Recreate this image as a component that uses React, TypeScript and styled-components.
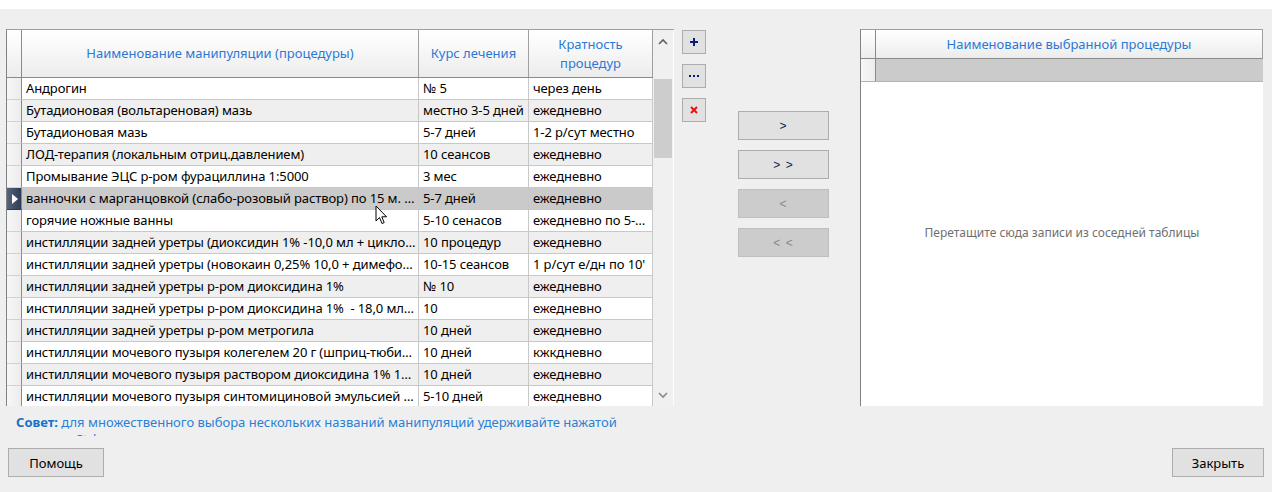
import React from "react";
import styled, { createGlobalStyle, css } from "styled-components";

const GlobalStyle = createGlobalStyle`
  html, body {
    margin: 0;
    padding: 0;
    background: #efefef;
  }
  * {
    box-sizing: border-box;
  }
`;

interface Proc {
  name: string;
  course: string;
  freq: string;
  clip?: boolean;
}

const procs: Proc[] = [
  { name: "Андрогин", course: "№ 5", freq: "через день" },
  { name: "Бутадионовая (вольтареновая) мазь", course: "местно 3-5 дней", freq: "ежедневно" },
  { name: "Бутадионовая мазь", course: "5-7 дней", freq: "1-2 р/сут местно" },
  { name: "ЛОД-терапия (локальным отриц.давлением)", course: "10 сеансов", freq: "ежедневно" },
  { name: "Промывание ЭЦС р-ром фурациллина 1:5000", course: "3 мес", freq: "ежедневно" },
  { name: "ванночки с марганцовкой (слабо-розовый раствор) по 15 м.\u00a0 2 раза", course: "5-7 дней", freq: "ежедневно" },
  { name: "горячие ножные ванны", course: "5-10 сенасов", freq: "ежедневно по 5-10 минут" },
  { name: "инстилляции задней уретры (диоксидин 1% -10,0 мл + циклоферон 2,0)", course: "10 процедур", freq: "ежедневно" },
  { name: "инстилляции задней уретры (новокаин 0,25% 10,0 + димефосфон 5,0)", course: "10-15 сеансов", freq: "1 р/сут е/дн по 10'", clip: true },
  { name: "инстилляции задней уретры р-ром диоксидина 1%", course: "№ 10", freq: "ежедневно" },
  { name: "инстилляции задней уретры р-ром диоксидина 1%\u00a0 - 18,0 мл + гидрокортизон", course: "10", freq: "ежедневно" },
  { name: "инстилляции задней уретры р-ром метрогила", course: "10 дней", freq: "ежедневно" },
  { name: "инстилляции мочевого пузыря колегелем 20 г (шприц-тюбик) в уретру", course: "10 дней", freq: "кжкдневно" },
  { name: "инстилляции мочевого пузыря раствором диоксидина 1% 10 мл", course: "10 дней", freq: "ежедневно" },
  { name: "инстилляции мочевого пузыря синтомициновой эмульсией 10%", course: "5-10 дней", freq: "ежедневно" },
];

const SELECTED = 5;

const Window = styled.div`
  width: 1272px;
  height: 492px;
  background: #efefef;
  font-family: "Noto Sans", "Open Sans", sans-serif;
  font-size: 13px;
  color: #000;
  display: flex;
  flex-direction: column;
  overflow: hidden;
`;

const TopStrip = styled.div`
  height: 9px;
  background: #fff;
`;

const Content = styled.div`
  flex: 1;
  display: flex;
  flex-direction: column;
  padding: 20px 8px 0 6px;
`;

const MainRow = styled.div`
  display: flex;
  align-items: flex-start;
`;

const LeftGrid = styled.div`
  position: relative;
  width: 668px;
  height: 377px;
  display: flex;
  border-top: 1px solid #a0a0a0;
  border-left: 1px solid #828282;
  background: #fff;
`;

const TableArea = styled.div`
  width: 646px;
  overflow: hidden;
`;

const HeaderRow = styled.div<{ $h: number }>`
  display: flex;
  height: ${p => p.$h}px;
  border-bottom: 1px solid #8a8a8a;
  background: linear-gradient(#ffffff, #f7f7f7 45%, #ececec);
`;

const HeadCell = styled.div<{ $w: number }>`
  width: ${p => p.$w}px;
  flex: none;
  display: flex;
  align-items: center;
  justify-content: center;
  text-align: center;
  color: #2b78d6;
  font-size: 13px;
  line-height: 19px;
  border-right: 1px solid #a0a0a0;
`;

const RowHeadCorner = styled(HeadCell)`
  border-right: 1px solid #8a8a8a;
`;

const DataRow = styled.div<{ $alt: boolean; $sel: boolean }>`
  display: flex;
  height: 22px;
  background: ${p => (p.$sel ? "#cacaca" : p.$alt ? "#efefef" : "#ffffff")};
`;

const RowHead = styled.div<{ $sel: boolean }>`
  width: 15px;
  flex: none;
  border-right: 1px solid #8a8a8a;
  border-bottom: 1px solid #d2d2d2;
  background: linear-gradient(90deg, #f7f7f7, #ececec);
  display: flex;
  align-items: center;
  justify-content: center;
  ${p =>
    p.$sel &&
    css`
      background: linear-gradient(90deg, #56647c, #2e3c56);
      border-bottom-color: #2e3c56;
    `}
`;

const Triangle = styled.div`
  width: 0;
  height: 0;
  border-top: 5px solid transparent;
  border-bottom: 5px solid transparent;
  border-left: 6px solid #fff;
  margin-left: 2px;
`;

const Cell = styled.div<{ $w: number; $clip?: boolean }>`
  width: ${p => p.$w}px;
  flex: none;
  padding: 0 1px 0 4px;
  border-right: 1px solid #c8c8c8;
  border-bottom: 1px solid #c8c8c8;
  line-height: 21px;
  letter-spacing: -0.1px;
  white-space: nowrap;
  overflow: hidden;
  text-overflow: ${p => (p.$clip ? "clip" : "ellipsis")};
`;

const ScrollBar = styled.div`
  width: 21px;
  flex: none;
  background: #f0f0f0;
  border-right: 1px solid #fbfbfb;
  display: flex;
  flex-direction: column;
  align-items: center;
`;

const ScrollArrow = styled.div`
  height: 22px;
  width: 100%;
  display: flex;
  align-items: center;
  justify-content: center;
`;

const ScrollTrack = styled.div`
  flex: 1;
  width: 100%;
  padding: 27px 1px 0 1px;
`;

const ScrollThumb = styled.div`
  height: 79px;
  background: #cdcdcd;
`;

const Pointer = styled.svg`
  position: absolute;
  left: 368px;
  top: 175px;
`;

const ToolColumn = styled.div`
  display: flex;
  flex-direction: column;
  gap: 10px;
  margin-left: 8px;
  padding-top: 1px;
`;

const ToolButton = styled.div`
  width: 24px;
  height: 24px;
  background: #e1e1e1;
  border: 1px solid #adadad;
  display: flex;
  align-items: center;
  justify-content: center;
`;

const MoveColumn = styled.div`
  display: flex;
  flex-direction: column;
  gap: 10px;
  margin-left: 32px;
  padding-top: 82px;
`;

const MoveButton = styled.div<{ $disabled?: boolean }>`
  width: 91px;
  height: 29px;
  display: flex;
  align-items: center;
  justify-content: center;
  font-family: "Liberation Sans", sans-serif;
  font-size: 12px;
  letter-spacing: 1px;
  background: ${p => (p.$disabled ? "#cccccc" : "#e1e1e1")};
  border: 1px solid ${p => (p.$disabled ? "#bfbfbf" : "#adadad")};
  color: ${p => (p.$disabled ? "#8a8a8a" : "#0b1f55")};
`;

const RightGrid = styled.div`
  width: 403px;
  height: 377px;
  margin-left: 31px;
  background: #fff;
  border-top: 1px solid #a0a0a0;
  border-left: 1px solid #828282;
  display: flex;
  flex-direction: column;
`;

const RightHeader = styled.div`
  display: flex;
  height: 29px;
  flex: none;
  border-bottom: 1px solid #8a8a8a;
  border-right: 1px solid #a0a0a0;
  background: linear-gradient(#ffffff, #f7f7f7 45%, #ececec);
`;

const RightTitle = styled(HeadCell)`
  border-right: none;
`;

const RightRow = styled.div`
  display: flex;
  height: 23px;
  flex: none;
  background: #cbcbcb;
  border-bottom: 1px solid #b4b4b4;
`;

const RightRowHead = styled.div`
  width: 15px;
  border-right: 1px solid #8a8a8a;
  background: linear-gradient(90deg, #f7f7f7, #ececec);
`;

const Placeholder = styled.div`
  padding-top: 143px;
  text-align: center;
  color: #6f6f6f;
  font-size: 12px;
  line-height: 16px;
`;

const Tip = styled.div`
  margin: 8px 0 0 10px;
  width: 640px;
  height: 22px;
  overflow: hidden;
  color: #2a7fd6;
  font-size: 13px;
  line-height: 17px;
`;

const TipLabel = styled.b`
  color: #1a6fc9;
  font-weight: 700;
`;

const Footer = styled.div`
  display: flex;
  justify-content: space-between;
  margin-top: 12px;
  padding-left: 2px;
`;

const DialogButton = styled.div<{ $w: number }>`
  width: ${p => p.$w}px;
  height: 29px;
  background: #e1e1e1;
  border: 1px solid #adadad;
  display: flex;
  align-items: center;
  justify-content: center;
  font-size: 13px;
`;

const COLS = [397, 110, 124];

export default function App() {
  return (
    <Window>
      <GlobalStyle />
      <TopStrip />
      <Content>
        <MainRow>
          <LeftGrid>
            <TableArea>
              <HeaderRow $h={48}>
                <RowHeadCorner $w={15} />
                <HeadCell $w={COLS[0]}>Наименование манипуляции (процедуры)</HeadCell>
                <HeadCell $w={COLS[1]}>Курс лечения</HeadCell>
                <HeadCell $w={COLS[2]}>
                  Кратность
                  <br />
                  процедур
                </HeadCell>
              </HeaderRow>
              {procs.map((p, i) => (
                <DataRow key={i} $alt={i % 2 === 1} $sel={i === SELECTED}>
                  <RowHead $sel={i === SELECTED}>{i === SELECTED && <Triangle />}</RowHead>
                  <Cell $w={COLS[0]}>{p.name}</Cell>
                  <Cell $w={COLS[1]}>{p.course}</Cell>
                  <Cell $w={COLS[2]} $clip={p.clip}>
                    {p.freq}
                  </Cell>
                </DataRow>
              ))}
            </TableArea>
            <ScrollBar>
              <ScrollArrow>
                <svg width="10" height="7" viewBox="0 0 10 7">
                  <path d="M1 6 L5 2 L9 6" fill="none" stroke="#606060" strokeWidth="1.6" />
                </svg>
              </ScrollArrow>
              <ScrollTrack>
                <ScrollThumb />
              </ScrollTrack>
              <ScrollArrow>
                <svg width="10" height="7" viewBox="0 0 10 7">
                  <path d="M1 1 L5 5 L9 1" fill="none" stroke="#8a8a8a" strokeWidth="1.6" />
                </svg>
              </ScrollArrow>
            </ScrollBar>
            <Pointer width="13" height="20" viewBox="0 0 13 20">
              <path
                d="M1 1 L1 16 L4.5 12.5 L7 18.5 L9.2 17.6 L6.8 11.8 L11.5 11.8 Z"
                fill="#fff"
                stroke="#000"
                strokeWidth="1"
                strokeLinejoin="round"
              />
            </Pointer>
          </LeftGrid>

          <ToolColumn>
            <ToolButton>
              <svg width="10" height="10" viewBox="0 0 10 10">
                <path d="M5 1 V9 M1 5 H9" stroke="#0a1a78" strokeWidth="2" />
              </svg>
            </ToolButton>
            <ToolButton>
              <svg width="10" height="4" viewBox="0 0 10 4">
                <rect x="0" y="1" width="2" height="2" fill="#0a1a78" />
                <rect x="4" y="1" width="2" height="2" fill="#0a1a78" />
                <rect x="8" y="1" width="2" height="2" fill="#0a1a78" />
              </svg>
            </ToolButton>
            <ToolButton>
              <svg width="8" height="8" viewBox="0 0 8 8">
                <path d="M1 1 L7 7 M7 1 L1 7" stroke="#e81010" strokeWidth="2" />
              </svg>
            </ToolButton>
          </ToolColumn>

          <MoveColumn>
            <MoveButton>&gt;</MoveButton>
            <MoveButton>&gt; &gt;</MoveButton>
            <MoveButton $disabled>&lt;</MoveButton>
            <MoveButton $disabled>&lt; &lt;</MoveButton>
          </MoveColumn>

          <RightGrid>
            <RightHeader>
              <RowHeadCorner $w={15} />
              <RightTitle $w={386}>Наименование выбранной процедуры</RightTitle>
            </RightHeader>
            <RightRow>
              <RightRowHead />
            </RightRow>
            <Placeholder>Перетащите сюда записи из соседней таблицы</Placeholder>
          </RightGrid>
        </MainRow>

        <Tip>
          <TipLabel>Совет:</TipLabel> для множественного выбора нескольких названий манипуляций удерживайте нажатой
          клавишу Ctrl
        </Tip>

        <Footer>
          <DialogButton $w={96}>Помощь</DialogButton>
          <DialogButton $w={92}>Закрыть</DialogButton>
        </Footer>
      </Content>
    </Window>
  );
}
